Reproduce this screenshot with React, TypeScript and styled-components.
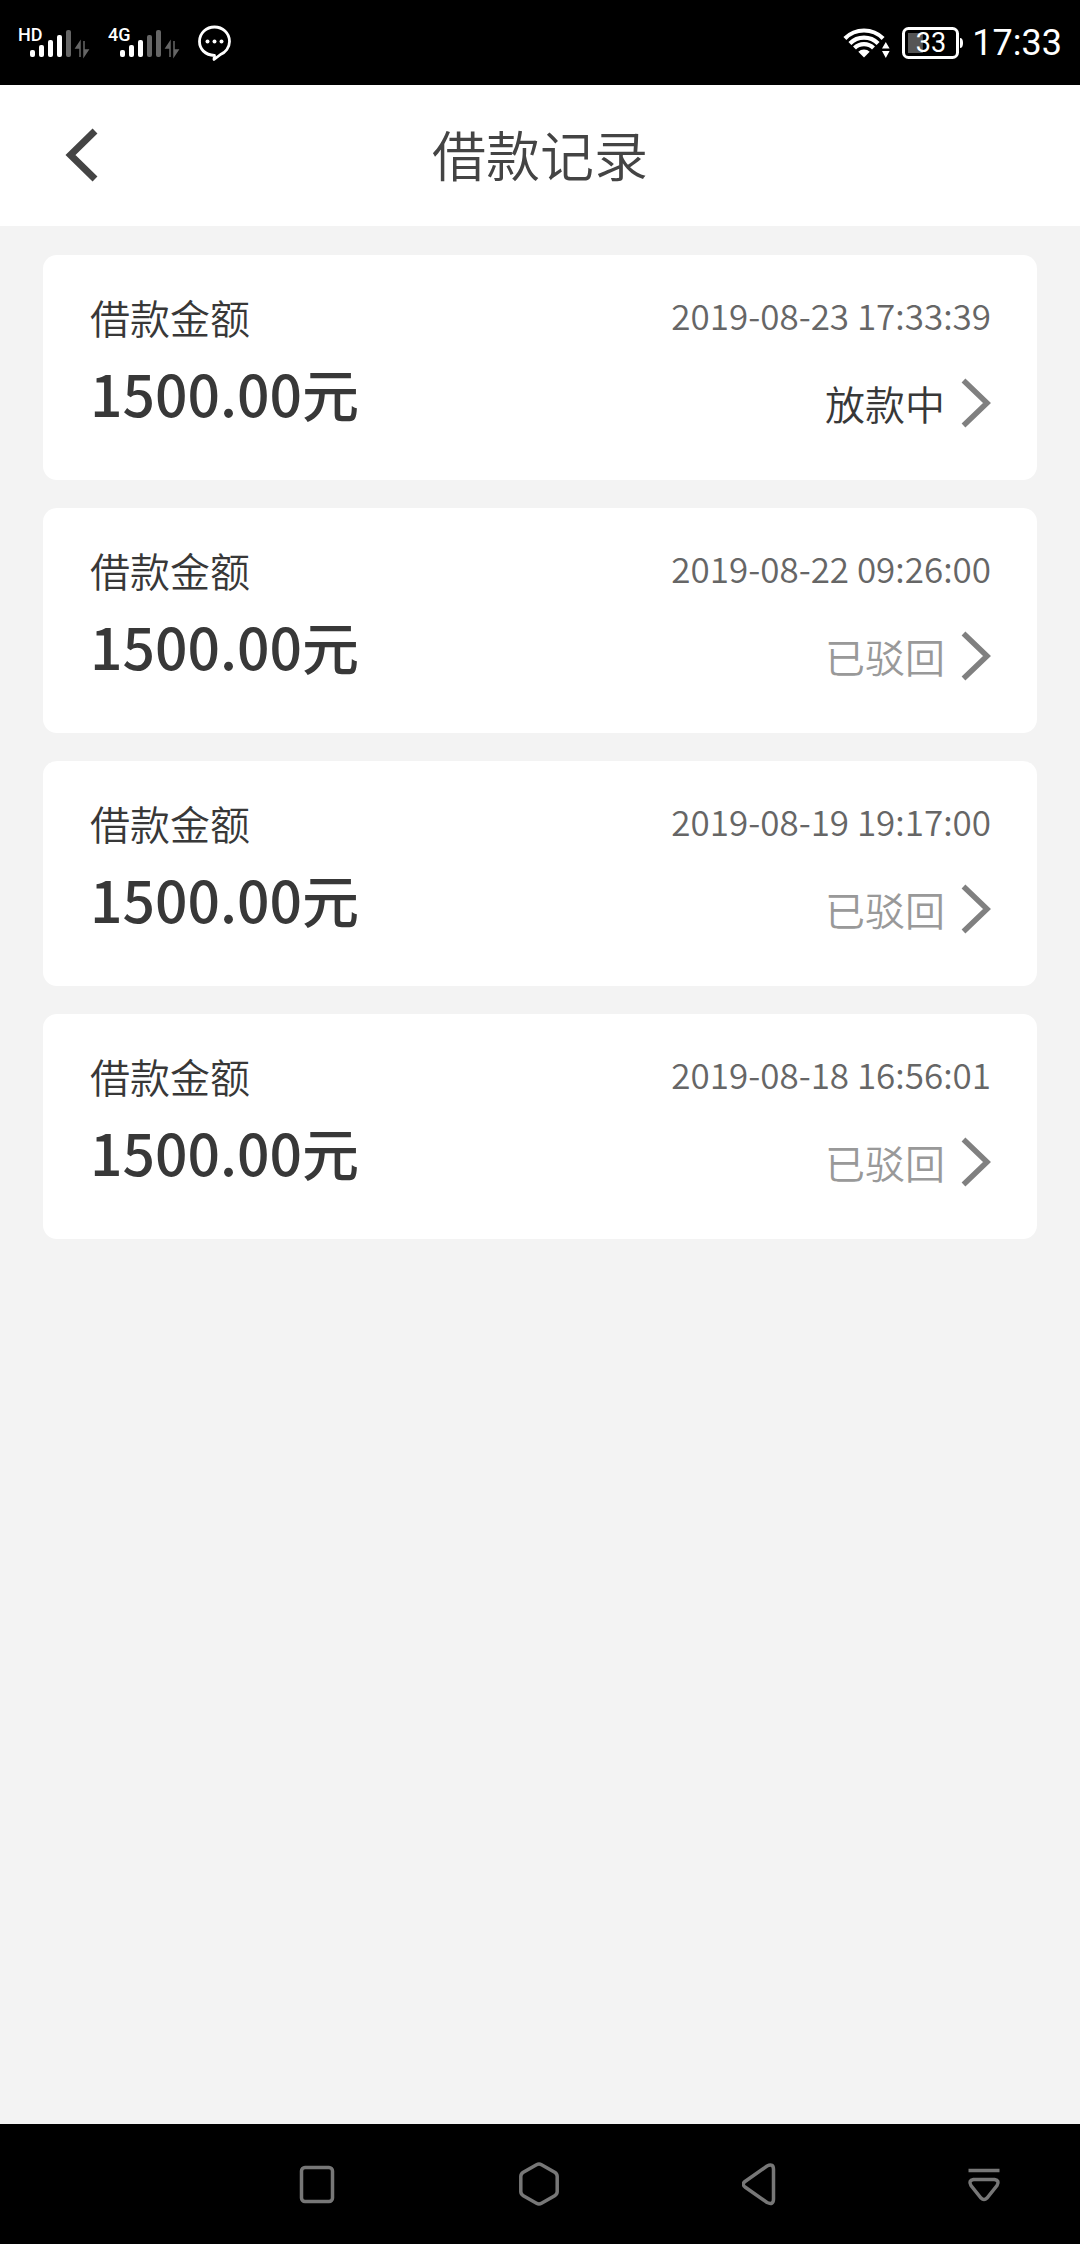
import React from "react";
import styled, { createGlobalStyle } from "styled-components";

const GlobalStyle = createGlobalStyle`
  *, *::before, *::after { box-sizing: border-box; }
  body {
    margin: 0;
    background: #f3f3f3;
    font-family: "Noto Sans CJK SC", "Noto Sans", sans-serif;
    color: #383838;
  }
`;

const Screen = styled.div`
  display: flex;
  flex-direction: column;
  min-height: 100vh;
`;

const StatusBar = styled.div`
  display: flex;
  align-items: center;
  justify-content: space-between;
  height: 85px;
  padding: 0 18px 0 16px;
  background: #000;
  color: #fff;
  font-family: Roboto, sans-serif;
`;

const StatusGroup = styled.div<{ $gap: number }>`
  display: flex;
  align-items: center;
  gap: ${(p) => p.$gap}px;
`;

const Clock = styled.span`
  font-size: 36px;
  line-height: 40px;
`;

const Header = styled.header`
  display: grid;
  grid-template-columns: 1fr auto 1fr;
  align-items: center;
  height: 141px;
  padding: 0 60px 4px;
  background: #fff;
`;

const BackButton = styled.button`
  display: flex;
  justify-self: start;
  padding: 0;
  border: 0;
  background: none;
`;

const Title = styled.h1`
  margin: 0;
  font-size: 54px;
  line-height: 80px;
  font-weight: 350;
  color: #444;
`;

const Records = styled.ul`
  flex: 1;
  display: flex;
  flex-direction: column;
  gap: 28px;
  margin: 0;
  padding: 29px 43px;
  list-style: none;
`;

const Card = styled.button`
  display: flex;
  justify-content: space-between;
  width: 100%;
  height: 225px;
  padding: 30px 46px 30px 47px;
  border: 0;
  border-radius: 14px;
  background: #fff;
  font: inherit;
  color: inherit;
  text-align: left;
`;

const Column = styled.span<{ $end?: boolean }>`
  display: flex;
  flex-direction: column;
  align-items: ${(p) => (p.$end ? "flex-end" : "flex-start")};
  gap: ${(p) => (p.$end ? 28 : 0)}px;
`;

const Label = styled.span`
  font-size: 40px;
  line-height: 64px;
  font-weight: 350;
`;

const Amount = styled.span`
  font-size: 57px;
  line-height: 86px;
  font-weight: 500;
`;

const Time = styled.span`
  font-size: 35px;
  line-height: 60px;
  font-weight: 350;
  color: #666;
`;

const StatusLine = styled.span`
  display: flex;
  align-items: center;
  gap: 16px;
`;

const Status = styled.span<{ $rejected: boolean }>`
  font-size: 40px;
  line-height: 60px;
  font-weight: 350;
  color: ${(p) => (p.$rejected ? "#999" : "#383838")};
`;

const NavBar = styled.nav`
  display: flex;
  justify-content: space-between;
  align-items: center;
  height: 120px;
  padding: 0 76px 0 297px;
  background: #000;
`;

const NavButton = styled.button`
  display: flex;
  padding: 0;
  border: 0;
  background: none;
`;

function Signal({ label, active }: { label: string; active: number }) {
  return (
    <svg width="74" height="36" viewBox="0 0 74 36" role="img" aria-label={label + " signal"}>
      <text x="2" y="16" fontSize="18" fontWeight="500" fontFamily="Roboto, sans-serif" fill="#fff">
        {label}
      </text>
      {[7, 12, 17, 22, 27].map((h, i) => (
        <rect key={h} x={14 + i * 9} y={32 - h} width="5" height={h} rx="2" fill={i < active ? "#fff" : "#666"} />
      ))}
      <path d="M64 32V17l-4 6h4M68 16v15l4-6h-4" fill="#666" stroke="#666" strokeWidth="1.5" />
    </svg>
  );
}

function ChatIcon() {
  return (
    <svg width="36" height="38" viewBox="0 0 36 38" aria-hidden="true">
      <path
        d="M18.500 31.500C9 31 3.500 25 3.500 17.500C3.500 9 10.500 3 18.500 3s15 6 15 14.500c0 6-4 11-9 13L18 35.500Z"
        fill="none"
        stroke="#fff"
        strokeWidth="2.800"
        strokeLinejoin="round"
      />
      <circle cx="11.500" cy="17.500" r="2" fill="#fff" />
      <circle cx="18.500" cy="17.500" r="2" fill="#fff" />
      <circle cx="25.500" cy="17.500" r="2" fill="#fff" />
    </svg>
  );
}

function WifiIcon() {
  return (
    <svg width="51" height="32" viewBox="0 0 51 32" aria-hidden="true">
      <g fill="none" stroke="#fff" strokeWidth="4.200">
        <path d="M1.900 11.400A27 27 0 0 1 40.100 11.400" />
        <path d="M6.900 16.400A20 20 0 0 1 35.100 16.400" />
        <path d="M11.500 21A13.500 13.500 0 0 1 30.500 21" />
      </g>
      <path d="M15.300 24.800A8 8 0 0 1 26.700 24.800L21 30.500Z" fill="#fff" />
      <path d="M39 21.500l3.800-6.500 3.800 6.500ZM39 24l3.800 7 3.800-7Z" fill="#fff" />
    </svg>
  );
}

function BatteryIcon({ level }: { level: number }) {
  return (
    <svg width="62" height="34" viewBox="0 0 62 34" role="img" aria-label="battery">
      <rect x="1.500" y="2.500" width="54" height="29" rx="5" fill="none" stroke="#fff" strokeWidth="3" />
      <rect x="6" y="7" width={(45 * level) / 100} height="20" fill="#555" />
      <path d="M58 12q3 0 3 5t-3 5Z" fill="#fff" />
      <text x="29" y="26" textAnchor="middle" fontSize="27" fontFamily="Roboto, sans-serif" fill="#fff">
        {level}
      </text>
    </svg>
  );
}

function Chevron() {
  return (
    <svg width="30" height="50" viewBox="0 0 30 50" aria-hidden="true">
      <path d="M2.500 2.500L26 25L2.500 47.500" fill="none" stroke="#808080" strokeWidth="5.500" />
    </svg>
  );
}

const records = [
  { time: "2019-08-23 17:33:39", amount: "1500.00元", status: "放款中", rejected: false },
  { time: "2019-08-22 09:26:00", amount: "1500.00元", status: "已驳回", rejected: true },
  { time: "2019-08-19 19:17:00", amount: "1500.00元", status: "已驳回", rejected: true },
  { time: "2019-08-18 16:56:01", amount: "1500.00元", status: "已驳回", rejected: true },
];

const navItems = [
  { name: "recent", shape: <rect x="4.500" y="6.500" width="31" height="34" rx="3.500" /> },
  {
    name: "home",
    shape: (
      <path d="M17.500 3.700Q20 2.300 22.500 3.700L35.700 11.300Q38.200 12.800 38.200 15.500V30.500Q38.200 33.200 35.700 34.700L22.500 42.300Q20 43.700 17.500 42.300L4.300 34.700Q1.800 33.200 1.800 30.500V15.500Q1.800 12.800 4.300 11.300Z" />
    ),
  },
  { name: "back", shape: <path d="M3 20.500L25 5Q31.500 2 31.500 8.500V38Q31.500 44.500 25 41.500L3 26Q-.5 23 3 20.500Z" /> },
  { name: "hide", shape: <path d="M4.500 9.500H35.500M9.500 18.500H30.500Q36 19.500 33 24.500L23 37Q20 40 17 37L7 24.500Q4 19.500 9.500 18.500Z" /> },
];

export default function App() {
  return (
    <Screen>
      <GlobalStyle />
      <StatusBar>
        <StatusGroup $gap={16}>
          <Signal label="HD" active={4} />
          <Signal label="4G" active={3} />
          <ChatIcon />
        </StatusGroup>
        <StatusGroup $gap={8}>
          <WifiIcon />
          <BatteryIcon level={33} />
          <Clock>17:33</Clock>
        </StatusGroup>
      </StatusBar>
      <Header>
        <BackButton aria-label="返回">
          <svg width="40" height="56" viewBox="0 0 40 56" aria-hidden="true">
            <path d="M35 5L10.500 29L35 53" fill="none" stroke="#444" strokeWidth="7" />
          </svg>
        </BackButton>
        <Title>借款记录</Title>
      </Header>
      <Records>
        {records.map((r) => (
          <li key={r.time}>
            <Card>
              <Column>
                <Label>借款金额</Label>
                <Amount>{r.amount}</Amount>
              </Column>
              <Column $end>
                <Time>{r.time}</Time>
                <StatusLine>
                  <Status $rejected={r.rejected}>{r.status}</Status>
                  <Chevron />
                </StatusLine>
              </Column>
            </Card>
          </li>
        ))}
      </Records>
      <NavBar>
        {navItems.map((n) => (
          <NavButton key={n.name} aria-label={n.name}>
            <svg width="40" height="46" viewBox="0 0 40 46" fill="none" stroke="#777" strokeWidth="3.500" aria-hidden="true">
              {n.shape}
            </svg>
          </NavButton>
        ))}
      </NavBar>
    </Screen>
  );
}
